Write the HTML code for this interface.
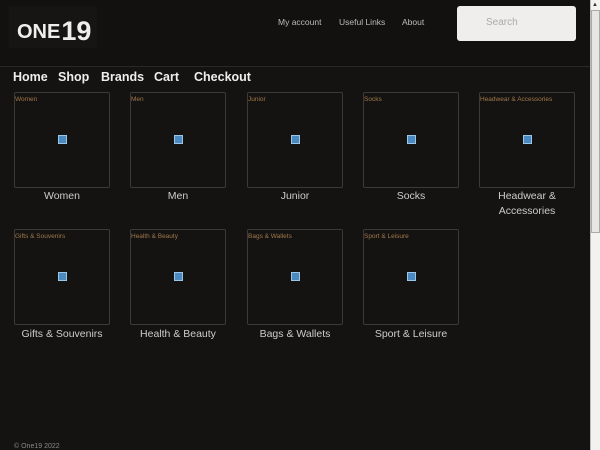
<!DOCTYPE html>
<html><head><meta charset="utf-8"><style>
*{margin:0;padding:0;box-sizing:border-box}
body{width:600px;height:450px;overflow:hidden;background:#141312;font-family:"Liberation Sans",sans-serif;color:#ddd;position:relative}
.hdr{position:absolute;left:0;top:0;width:590px;height:67px;background:#121110;border-bottom:1px solid #2a2826}
.logo{position:absolute;left:9px;top:6px;width:88px;height:42px;background:#161514}
.lt{position:absolute;left:17px;top:14px;color:#eee;font-family:"Liberation Sans",sans-serif;font-weight:bold;font-size:20px;letter-spacing:0px;white-space:nowrap}
.lt b{font-size:27px;position:relative;top:2px;margin-left:1px}
.tl{position:absolute;top:17px;font-size:8.5px;color:#bbb}
.search{position:absolute;left:457px;top:6px;width:119px;height:35px;background:#efeeed;border-radius:3px;color:#aaa;font-size:10px;padding:11px 0 0 29px}
.nav span{position:absolute;top:70px;font-size:12.5px;font-weight:bold;color:#eee}
.box{position:absolute;width:96px;height:96px;border:1px solid #3c3a38;border-radius:2px}
.box i{position:absolute;left:0;top:3px;font-style:normal;font-size:6.5px;color:#a07848;white-space:nowrap}
.box u{position:absolute;left:43px;top:42px;width:9px;height:9px;background:#4a8ac0;border:1px solid #9cc6e6}
.cap{position:absolute;width:116px;text-align:center;font-size:10.5px;color:#ccc;line-height:15px}
.foot{position:absolute;left:14px;top:443px;font-size:7px;color:#888}
.sb{position:absolute;left:590px;top:0;width:10px;height:450px;background:#f3f2f1;border-left:1px solid #bbb}
.th{position:absolute;left:591px;top:10px;width:9px;height:223px;background:#e8e6e4;border:1px solid #aaa}
.ar{position:absolute;left:592px;top:2px;font-size:6px;color:#333}
</style></head><body>
<div class="hdr">
<div class="logo"></div>
<div class="lt">ONE<b>19</b></div>
<div class="tl" style="left:278px">My account</div>
<div class="tl" style="left:339px">Useful Links</div>
<div class="tl" style="left:402px">About</div>
<div class="search">Search</div>
</div>
<div class="nav"><span style="left:13px">Home</span><span style="left:58px">Shop</span><span style="left:101px">Brands</span><span style="left:154px">Cart</span><span style="left:194px">Checkout</span></div>

<div class="box" style="left:14px;top:92px"><i>Women</i><u></u></div>
<div class="box" style="left:130px;top:92px"><i>Men</i><u></u></div>
<div class="box" style="left:247px;top:92px"><i>Junior</i><u></u></div>
<div class="box" style="left:363px;top:92px"><i>Socks</i><u></u></div>
<div class="box" style="left:479px;top:92px"><i>Headwear &amp; Accessories</i><u></u></div>
<div class="cap" style="left:4px;top:189px">Women</div>
<div class="cap" style="left:120px;top:189px">Men</div>
<div class="cap" style="left:237px;top:189px">Junior</div>
<div class="cap" style="left:353px;top:189px">Socks</div>
<div class="cap" style="left:469px;top:189px">Headwear &amp;<br>Accessories</div>

<div class="box" style="left:14px;top:229px"><i>Gifts &amp; Souvenirs</i><u></u></div>
<div class="box" style="left:130px;top:229px"><i>Health &amp; Beauty</i><u></u></div>
<div class="box" style="left:247px;top:229px"><i>Bags &amp; Wallets</i><u></u></div>
<div class="box" style="left:363px;top:229px"><i>Sport &amp; Leisure</i><u></u></div>
<div class="cap" style="left:4px;top:327px">Gifts &amp; Souvenirs</div>
<div class="cap" style="left:120px;top:327px">Health &amp; Beauty</div>
<div class="cap" style="left:237px;top:327px">Bags &amp; Wallets</div>
<div class="cap" style="left:353px;top:327px">Sport &amp; Leisure</div>

<div class="foot">© One19 2022</div>
<div class="sb"></div><div class="th"></div><div class="ar">▲</div>
</body></html>
